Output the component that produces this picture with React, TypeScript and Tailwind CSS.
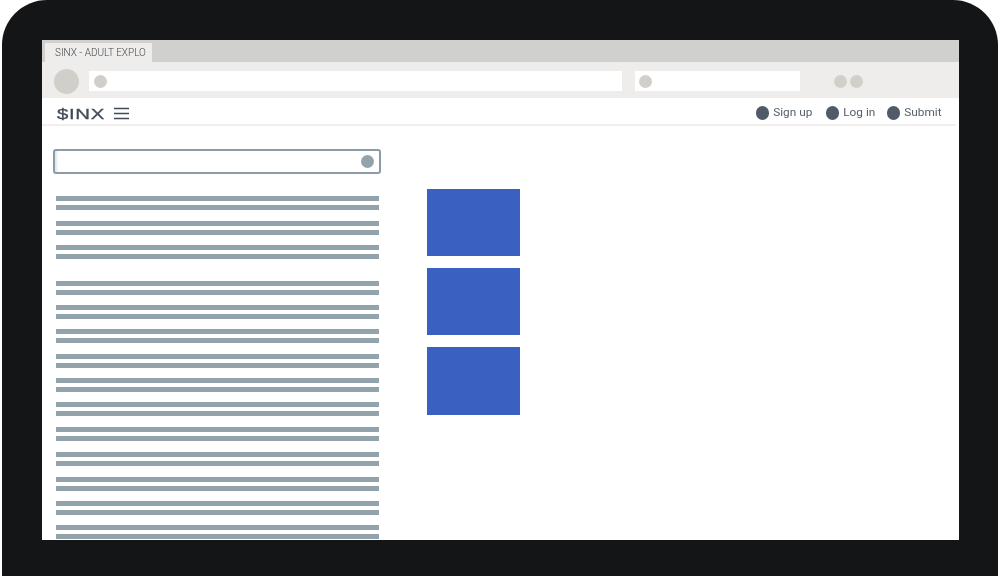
const rowGaps = [0, 25, 24, 36, 24, 24, 25, 24, 24, 25, 25, 25, 24, 24];

const TextRow = ({ gap }: { gap: number }) => (
  <div className="flex flex-col gap-1" style={{ marginTop: gap }}>
    <div className="h-[5px] bg-[#93a3ac]" />
    <div className="h-[5px] bg-[#93a3ac]" />
  </div>
);

const NavLink = ({ label, className = '' }: { label: string; className?: string }) => (
  <span className={`flex items-center gap-[4px] ${className}`}>
    <span className="h-[13.5px] w-[13.5px] rounded-full bg-[#515a68]" />
    <span>{label}</span>
  </span>
);

const BlueBox = () => <div className="h-[67.5px] w-[93px] bg-[#3a60c2]" />;

export default function App() {
  return (
    <div className="h-[576px] w-[1000px] overflow-hidden bg-white font-['Roboto',sans-serif]">
      <div className="ml-[2px] h-[576px] w-[996px] rounded-t-[45px] bg-[#141517] pl-[40px] pt-[40px] blur-[0.4px]">
        <div className="flex h-[500px] w-[917px] flex-col overflow-hidden bg-white">
          {/* Tab strip */}
          <div className="flex h-[22px] shrink-0 items-end bg-[#d0d0ce] pl-[3px]">
            <div className="flex h-[19px] w-[107px] items-center whitespace-nowrap bg-[#eeedeb] pl-[10px] text-[10px] font-light text-[#44494f]">
              SINX - ADULT EXPLO
            </div>
          </div>

          {/* Browser toolbar */}
          <div className="flex h-[36px] shrink-0 items-center bg-[#eeedeb] pl-[12px] pt-[2px]">
            <div className="h-[25px] w-[25px] rounded-full bg-[#d0cfc9]" />
            <div className="ml-[10px] flex h-[20px] w-[533px] items-center bg-white pl-[5px]">
              <div className="h-[13px] w-[13px] rounded-full bg-[#d0cfc9]" />
            </div>
            <div className="ml-[13px] flex h-[20px] w-[165px] items-center bg-white pl-[4px]">
              <div className="h-[13px] w-[13px] rounded-full bg-[#d0cfc9]" />
            </div>
            <div className="ml-[34px] flex gap-[3px]">
              <div className="h-[13px] w-[13px] rounded-full bg-[#d0cfc9]" />
              <div className="h-[13px] w-[13px] rounded-full bg-[#d0cfc9]" />
            </div>
          </div>

          {/* Site nav */}
          <div className="flex h-[28px] w-[914px] shrink-0 items-center justify-between border-b-2 border-[#f0efed] pl-[15px] pr-[14.5px] pt-[4px]">
            <div className="flex items-center gap-[8px]">
              <span className="w-[49px] origin-left scale-x-[1.36] font-['Liberation_Sans',sans-serif] text-[15px] leading-none tracking-[0.5px] text-[#414a58] [-webkit-text-stroke:0.3px_#414a58]">
                $INX
              </span>
              <svg width="15" height="13" viewBox="0 0 15 13" className="text-[#414a58]">
                <path d="M0 1.5h15M0 6.5h15M0 11.5h15" stroke="currentColor" strokeWidth="1.6" />
              </svg>
            </div>
            <div className="flex items-center gap-[11.5px] text-[11.8px] text-[#555d6a]">
              <NavLink label="Sign up" className="mr-[2px]" />
              <NavLink label="Log in" />
              <NavLink label="Submit" />
            </div>
          </div>

          {/* Page body */}
          <div className="flex min-h-0 flex-1 overflow-hidden">
            <div className="ml-[11px] w-[328px] shrink-0 pt-[23px]">
              <div className="flex h-[25px] items-center justify-end rounded-[3px] border-2 border-[#8a9ca8] pr-[5px] shadow-[inset_4px_0_3px_-2px_#dfe5e8]">
                <div className="h-[13px] w-[13px] rounded-full bg-[#93a3ac]" />
              </div>
              <div className="ml-[3px] mt-[22px] w-[323px]">
                {rowGaps.map((gap, i) => (
                  <TextRow key={i} gap={gap === 0 ? 0 : gap - 14} />
                ))}
              </div>
            </div>
            <div className="ml-[46px] flex flex-col gap-[11.75px] pt-[62.5px]">
              <BlueBox />
              <BlueBox />
              <BlueBox />
            </div>
          </div>
        </div>
      </div>
    </div>
  );
}
